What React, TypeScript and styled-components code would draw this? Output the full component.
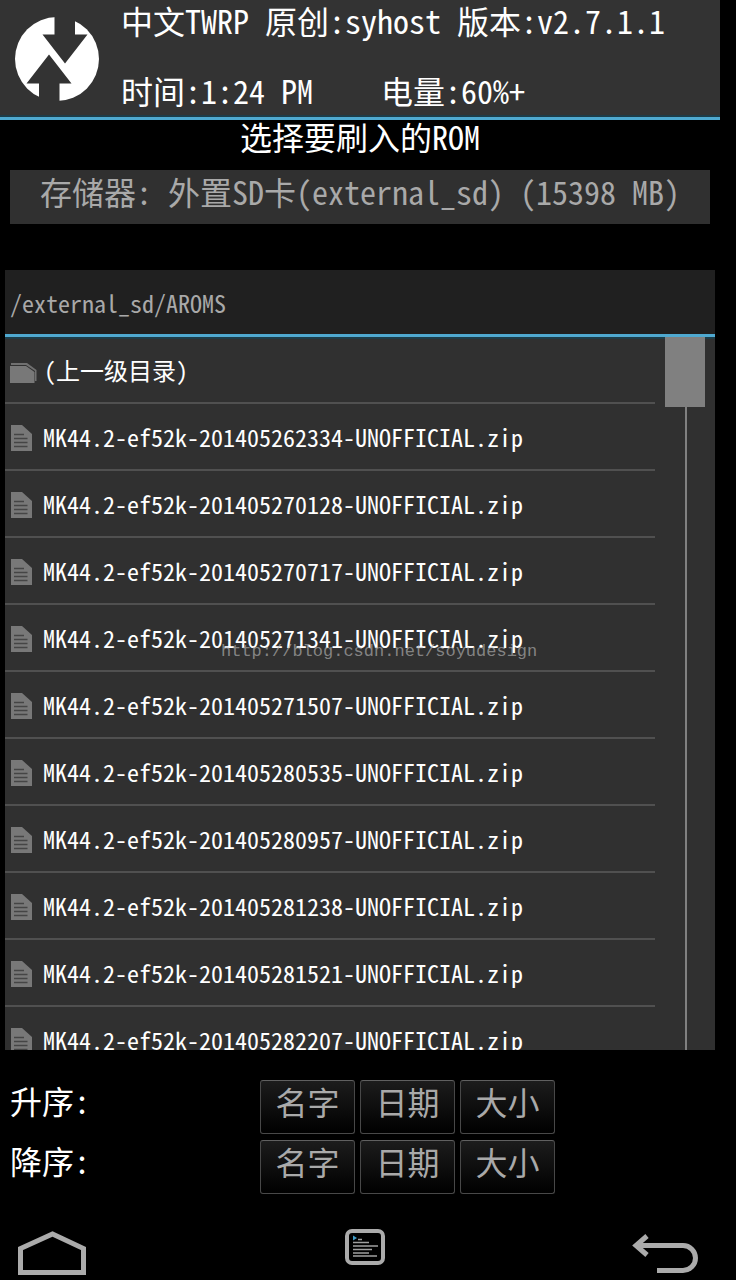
import React from "react";
import styled, { createGlobalStyle } from "styled-components";

const accent = "#4fa9d0";

const GlobalStyle = createGlobalStyle`
  *, *::before, *::after { box-sizing: border-box; }
  html, body { margin: 0; background: #000; }
  body, button {
    font-family: "Noto Sans Mono CJK SC", "Liberation Mono", "Noto Sans CJK SC", monospace;
    font-weight: 400;
  }
`;

const Page = styled.div`
  display: flex;
  flex-direction: column;
  height: 100vh;
  min-height: 640px;
  padding-right: 16px;
  background: #000;
  color: #fff;
  font-size: 32px;
  line-height: 40px;
  white-space: pre;
`;

const Header = styled.header`
  display: flex;
  flex: none;
  gap: 20px;
  height: 120px;
  padding-left: 15px;
  background: #333;
  border-bottom: 3px solid ${accent};
  box-shadow: inset 0 -2px 0 #1d3c48;
`;

const Logo = styled.svg`
  flex: none;
  width: 86px;
  height: 86px;
  margin-top: 16px;
`;

const HeaderText = styled.div`
  display: flex;
  flex-direction: column;
  gap: 30px;
`;

const Status = styled.div`
  display: grid;
  grid-template-columns: 260px auto;
`;

const Title = styled.h1`
  flex: none;
  margin: 0 0 14px;
  height: 36px;
  font-size: 32px;
  font-weight: 400;
  line-height: 32px;
  text-align: center;
`;

const StorageButton = styled.button`
  flex: none;
  height: 54px;
  margin: 0 10px 46px;
  padding: 0 0 12px;
  border: 0;
  background: #303030;
  color: #a9a9a9;
  font-size: 32px;
  line-height: 40px;
  white-space: pre;
`;

const Browser = styled.main`
  display: flex;
  flex: 1;
  flex-direction: column;
  min-height: 0;
  margin: 0 5px;
  background: #303030;
  font-size: 24px;
  line-height: 36px;
`;

const PathBar = styled.div`
  display: flex;
  flex: none;
  align-items: center;
  height: 67px;
  padding: 2px 5px 0;
  background: #202020;
  border-bottom: 3px solid ${accent};
  color: #a9a9a9;
`;

const ListArea = styled.div`
  display: flex;
  flex: 1;
  gap: 10px;
  min-height: 0;
  padding-right: 10px;
  box-shadow: inset 0 2px 0 #1d3c48;
`;

const List = styled.ul`
  flex: 1;
  margin: 0;
  padding: 0;
  overflow-y: auto;
  scrollbar-width: none;
  list-style: none;
`;

const Entry = styled.button<{ $folder?: boolean }>`
  display: flex;
  align-items: center;
  gap: ${(p) => (p.$folder ? 7 : 11)}px;
  width: 100%;
  height: 67px;
  padding: 0 5px;
  border: 0;
  border-bottom: 2px solid #505050;
  background: transparent;
  color: #fff;
  font-size: 24px;
  line-height: 36px;
  text-align: left;
  white-space: pre;

  svg { flex: none; margin-top: ${(p) => (p.$folder ? 6 : 2)}px; }
`;

const Track = styled.div`
  flex: none;
  width: 40px;
  background: linear-gradient(#808080, #808080) 20px 0 / 2px 100% no-repeat;
`;

const Thumb = styled.div`
  height: 70px;
  background: #808080;
`;

const Watermark = styled.div`
  position: absolute;
  top: 640px;
  left: 221px;
  color: rgba(180, 180, 180, 0.65);
  font-family: "Liberation Mono", monospace;
  font-size: 17px;
  line-height: 24px;
  pointer-events: none;
`;

const SortPanel = styled.section`
  display: flex;
  flex: none;
  flex-direction: column;
  gap: 6px;
  padding: 30px 10px 34px;
`;

const SortRow = styled.div`
  display: grid;
  grid-template-columns: 245px repeat(3, 95px);
  gap: 5px;
  height: 54px;
`;

const SortLabel = styled.span`
  line-height: 40px;
`;

const SortButton = styled.button`
  padding: 0 0 12px;
  border: 1px solid #484848;
  border-top-color: #606060;
  border-radius: 3px;
  background: linear-gradient(#1c1c1c, #000);
  color: #a9a9a9;
  font-size: 32px;
  line-height: 40px;
`;

const Nav = styled.nav`
  display: grid;
  flex: none;
  grid-template-columns: 1fr auto 1fr;
  height: 52px;
  padding: 0 6px 0 16px;
`;

const NavButton = styled.button<{ $align?: string }>`
  justify-self: ${(p) => p.$align || "center"};
  height: 52px;
  padding: 0;
  border: 0;
  background: transparent;

  svg { display: block; }
`;

const FolderIcon = () => (
  <svg width="27" height="20" viewBox="0 0 27 20" aria-hidden="true">
    <path d="M1 0H17L26.500 7V18H25V8L16 2H1Z" fill="#707070" />
    <path d="M0 3H16L24.500 9V20H0Z" fill="#787878" />
  </svg>
);

const FileIcon = () => (
  <svg width="22" height="26" viewBox="0 0 22 26" aria-hidden="true">
    <path d="M1 0H12L22 9V26H1Z" fill="#787878" />
    <path d="M4 9.500H14M4 13.500H17.500M4 17.500H17.500M4 21.500H17.500" stroke="#454545" strokeWidth="1.4" />
  </svg>
);

const files = [
  "201405262334",
  "201405270128",
  "201405270717",
  "201405271341",
  "201405271507",
  "201405280535",
  "201405280957",
  "201405281238",
  "201405281521",
  "201405282207",
];

const sortKeys = ["名字", "日期", "大小"];

export default function App() {
  return (
    <Page>
      <GlobalStyle />
      <Header>
        <Logo viewBox="0 0 86 86" role="img" aria-label="TWRP">
          <circle cx="42" cy="43" r="42" fill="#fff" />
          <path d="M39.500 0H60V18.500H72.500L50 47.500L27.500 18.500H39.500Z" fill="#333" />
          <path d="M34 38.500L56.500 67.500H44.500V86H24V67.500H11.500Z" fill="#333" />
        </Logo>
        <HeaderText>
          <div>中文TWRP 原创:syhost 版本:v2.7.1.1</div>
          <Status>
            <span>时间:1:24 PM</span>
            <span>电量:60%+</span>
          </Status>
        </HeaderText>
      </Header>
      <Title>选择要刷入的ROM</Title>
      <StorageButton>存储器: 外置SD卡(external_sd) (15398 MB)</StorageButton>
      <Browser>
        <PathBar>/external_sd/AROMS</PathBar>
        <ListArea>
          <List>
            <li>
              <Entry $folder>
                <FolderIcon />
                (上一级目录)
              </Entry>
            </li>
            {files.map((stamp) => (
              <li key={stamp}>
                <Entry>
                  <FileIcon />
                  {`MK44.2-ef52k-${stamp}-UNOFFICIAL.zip`}
                </Entry>
              </li>
            ))}
          </List>
          <Track>
            <Thumb />
          </Track>
        </ListArea>
      </Browser>
      <SortPanel>
        {["升序:", "降序:"].map((label) => (
          <SortRow key={label} role="group" aria-label={label}>
            <SortLabel>{label}</SortLabel>
            {sortKeys.map((key) => (
              <SortButton key={key}>{key}</SortButton>
            ))}
          </SortRow>
        ))}
      </SortPanel>
      <Nav>
        <NavButton $align="start" aria-label="Home">
          <svg width="72" height="52" viewBox="0 0 72 52">
            <path d="M4.500 44.500V20.500L36.500 6L67.500 20.500V44.500Z" fill="none" stroke="#ababab" strokeWidth="5" />
          </svg>
        </NavButton>
        <NavButton aria-label="Console">
          <svg width="42" height="52" viewBox="0 0 42 52">
            <rect x="3" y="3" width="36" height="32" rx="5" fill="#000" stroke="#ababab" strokeWidth="4" />
            <path d="M9 7.500L13 10L9 12.500Z" fill="#3f9cc8" />
            <path d="M14 11.500H18M9 14.500H25M9 18H34M9 21.500H28M9 25H25M9 28H33" stroke="#a0a0a0" strokeWidth="1.6" />
          </svg>
        </NavButton>
        <NavButton $align="end" aria-label="Back">
          <svg width="82" height="52" viewBox="0 0 82 52">
            <path d="M4 17.500H51A12.500 12.500 0 0 1 51 42.500H25" fill="none" stroke="#ababab" strokeWidth="5" />
            <path d="M15 8L4 17.500L15 27" fill="none" stroke="#ababab" strokeWidth="5" />
          </svg>
        </NavButton>
      </Nav>
      <Watermark>http://blog.csdn.net/soyudesign</Watermark>
    </Page>
  );
}
